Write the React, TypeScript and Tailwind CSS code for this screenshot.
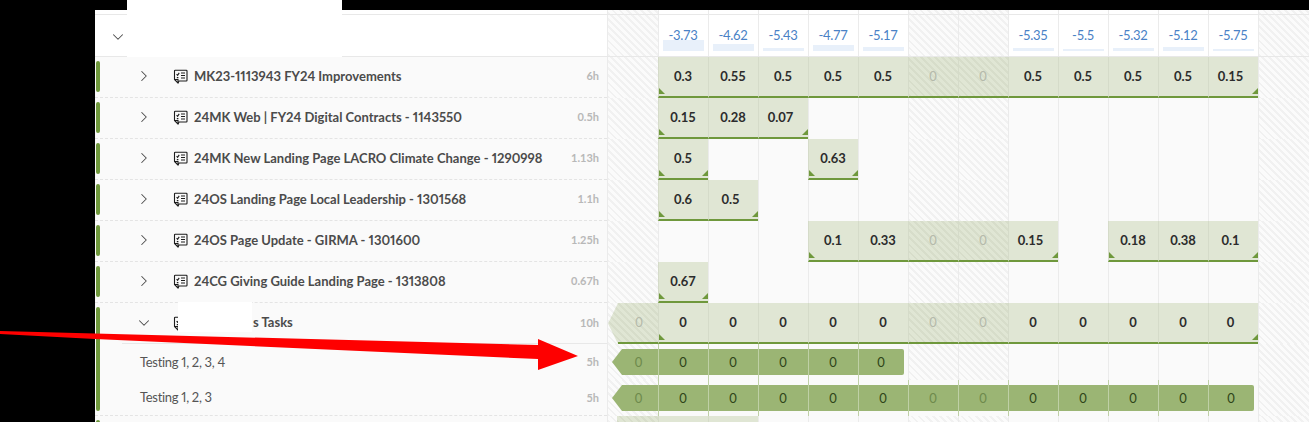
import { ChevronDown, ChevronRight } from 'lucide-react'

type Value = string | null

const HATCH = 'bg-[repeating-linear-gradient(45deg,#f1f1f1_0px,#f1f1f1_2px,#fbfbfb_2px,#fbfbfb_5px)]'
const HATCH_GREEN = 'bg-[repeating-linear-gradient(45deg,#d7ddca_0px,#d7ddca_2px,#e0e6d4_2px,#e0e6d4_5px)]'

const estimates: { label: string; bar: number }[] = [
  { label: '-3.73', bar: 11 },
  { label: '-4.62', bar: 7 },
  { label: '-5.43', bar: 3 },
  { label: '-4.77', bar: 6 },
  { label: '-5.17', bar: 4 },
  { label: '', bar: 0 },
  { label: '', bar: 0 },
  { label: '-5.35', bar: 3 },
  { label: '-5.5', bar: 2 },
  { label: '-5.32', bar: 3 },
  { label: '-5.12', bar: 4 },
  { label: '-5.75', bar: 2 },
]

const rows: { name: string; total: string; cells: Value[] }[] = [
  {
    name: 'MK23-1113943 FY24 Improvements',
    total: '6h',
    cells: ['0.3', '0.55', '0.5', '0.5', '0.5', '0', '0', '0.5', '0.5', '0.5', '0.5', '0.15'],
  },
  {
    name: '24MK Web | FY24 Digital Contracts - 1143550',
    total: '0.5h',
    cells: ['0.15', '0.28', '0.07', null, null, null, null, null, null, null, null, null],
  },
  {
    name: '24MK New Landing Page LACRO Climate Change - 1290998',
    total: '1.13h',
    cells: ['0.5', null, null, '0.63', null, null, null, null, null, null, null, null],
  },
  {
    name: '24OS Landing Page Local Leadership - 1301568',
    total: '1.1h',
    cells: ['0.6', '0.5', null, null, null, null, null, null, null, null, null, null],
  },
  {
    name: '24OS Page Update - GIRMA - 1301600',
    total: '1.25h',
    cells: [null, null, null, '0.1', '0.33', '0', '0', '0.15', null, '0.18', '0.38', '0.1'],
  },
  {
    name: '24CG Giving Guide Landing Page - 1313808',
    total: '0.67h',
    cells: ['0.67', null, null, null, null, null, null, null, null, null, null, null],
  },
]

const isWeekend = (i: number) => i === 5 || i === 6

function TaskIcon() {
  return (
    <svg width="15" height="15" viewBox="0 0 15 15" fill="none" stroke="#1c1c1c" strokeWidth="1.1" className="shrink-0">
      <path d="M1.5 10.5V2a.7.7 0 0 1 .7-.7h11.1a.7.7 0 0 1 .7.7v9.3a.7.7 0 0 1-.7.7H6l-1 2-3.5-3.5z" />
      <path d="M1.5 10.5H5V14" />
      <path d="M3.6 5.2l1 1.1 1.6-2.4" />
      <path d="M8 4h4M8 6.5h4M8 9h4M3.8 8.6h1.6" />
    </svg>
  )
}

function Corner({ side }: { side: 'left' | 'right' }) {
  return side === 'left' ? (
    <div className="absolute bottom-[2px] left-0 h-[6px] w-[6px] bg-[#6f983c] [clip-path:polygon(0_0,100%_100%,0_100%)]" />
  ) : (
    <div className="absolute bottom-[2px] right-0 h-[6px] w-[6px] bg-[#6f983c] [clip-path:polygon(100%_0,100%_100%,0_100%)]" />
  )
}

function SideCell() {
  return <div className={`h-full w-[51px] shrink-0 border-l border-[#ebebeb] ${HATCH}`} />
}

function BarCell({ value, index, cells }: { value: Value; index: number; cells: Value[] }) {
  const weekend = isWeekend(index)
  if (value === null) {
    return <div className={`h-full w-[50px] shrink-0 border-l border-[#ebebeb] ${weekend ? HATCH : ''}`} />
  }
  const first = index === 0 || cells[index - 1] === null
  const last = index === cells.length - 1 || cells[index + 1] === null
  return (
    <div
      className={`relative flex h-full w-[50px] shrink-0 items-center justify-center border-b-2 border-l border-b-[#6f983c] border-l-[#d5dbc9] text-[13px] ${
        weekend ? `${HATCH_GREEN} font-normal text-[#b4b9aa]` : 'bg-[#e0e6d4] font-bold text-[#2c2c2c]'
      } ${last && !first ? 'pr-[6px]' : 'pr-[1px]'}`}
    >
      {value}
      {first && <Corner side="left" />}
      {last && <Corner side="right" />}
    </div>
  )
}

function TaskRow({ name, total, cells }: { name: string; total: string; cells: Value[] }) {
  return (
    <div className="flex h-[41px] bg-[#fafafa]">
      <div className="relative flex w-[512px] shrink-0 items-center border-b border-dashed border-[#e4e4e4] pb-[1px] pr-2">
        <div className="absolute left-[1px] top-[4px] bottom-[5px] w-[4px] rounded-[2px] bg-[#6f983c]" />
        <ChevronRight size={18} strokeWidth={1.4} className="-mt-[1px] ml-[40px] text-[#4b4b4b]" />
        <div className="ml-[20px] flex items-center gap-[6px]">
          <TaskIcon />
          <span className="text-[13px] font-bold text-[#4b4b4b] proportional-nums">{name}</span>
        </div>
        <span className="ml-auto text-[11px] font-bold text-[#b8b8b8]">{total}</span>
      </div>
      <SideCell />
      {cells.map((value, i) => (
        <BarCell key={i} value={value} index={i} cells={cells} />
      ))}
      <SideCell />
    </div>
  )
}

function GroupRow() {
  return (
    <div className="flex h-[41px] bg-[#fafafa]">
      <div className="relative flex w-[512px] shrink-0 items-center pb-[1px] pr-2">
        <div className="absolute left-[1px] top-[4px] bottom-0 w-[4px] rounded-t-[2px] bg-[#6f983c]" />
        <div className="absolute bottom-0 left-[27px] right-0 h-px bg-[#e8e8e8]" />
        <ChevronDown size={18} strokeWidth={1.4} className="-mt-[1px] ml-[40px] text-[#4b4b4b]" />
        <div className="ml-[20px] flex items-center gap-[6px]">
          <TaskIcon />
          <span className="pl-[59px] text-[13px] font-bold text-[#4b4b4b]">s Tasks</span>
        </div>
        <span className="ml-auto text-[11px] font-bold text-[#b8b8b8]">10h</span>
      </div>
      <div className={`relative h-full w-[51px] shrink-0 border-l border-[#ebebeb] ${HATCH}`}>
        <div className={`flex h-full items-center justify-center pb-[1px] pl-[12px] text-[13px] text-[#b4b9aa] [clip-path:polygon(0_50%,10px_0,100%_0,100%_100%,10px_100%)] ${HATCH_GREEN}`}>
          0
        </div>
        <div className="absolute bottom-0 left-[10px] right-0 h-[2px] bg-[#6f983c]" />
      </div>
      {Array.from({ length: 12 }, (_, i) => (
        <BarCell key={i} value="0" index={i} cells={Array(12).fill('0')} />
      ))}
      <SideCell />
    </div>
  )
}

function SubRow({ name, count, dashed }: { name: string; count: number; dashed?: boolean }) {
  return (
    <div className="flex h-[36px] bg-[#fafafa]">
      <div className={`relative flex w-[512px] shrink-0 items-center pr-2 pt-[1px] ${dashed ? 'border-b border-dashed border-[#e4e4e4]' : ''}`}>
        <div className={`absolute left-[1px] top-0 w-[4px] bg-[#6f983c] ${dashed ? 'bottom-[4px] rounded-b-[2px]' : 'bottom-0'}`} />
        <span className="ml-[45px] text-[13px] tracking-[-0.3px] text-[#555] proportional-nums">{name}</span>
        <span className="ml-auto text-[11px] font-bold text-[#b8b8b8]">5h</span>
      </div>
      <div className={`h-full w-[51px] shrink-0 border-l border-[#ebebeb] py-[5px] ${HATCH}`}>
        <div className="ml-[4px] flex h-[26px] items-center justify-center bg-[#9bb574] pl-[7px] pt-[1px] text-[13px] text-[#6e8a4c] [clip-path:polygon(0_50%,10px_0,100%_0,100%_100%,10px_100%)]">
          0
        </div>
      </div>
      {Array.from({ length: 12 }, (_, i) => {
        const on = i < count
        const last = i === count - 1
        return (
          <div key={i} className={`h-full w-[50px] shrink-0 border-l py-[5px] ${on ? 'border-[#bfd0a6]' : 'border-[#ebebeb]'} ${isWeekend(i) && !on ? HATCH : ''}`}>
            {on && (
              <div
                className={`flex h-[26px] items-center justify-center bg-[#9bb574] pr-[1px] pt-[1px] text-[13px] ${isWeekend(i) ? 'text-[#6e8a4c]' : 'text-[#2e4418]'} ${
                  last ? 'mr-[4px] rounded-r-[2px]' : ''
                }`}
              >
                0
              </div>
            )}
          </div>
        )
      })}
      <SideCell />
    </div>
  )
}

export default function App() {
  return (
    <div className="relative h-[422px] w-[1309px] overflow-hidden bg-black pl-[95px] pt-[10px] font-['Lato','Noto_Sans',sans-serif]">
      {/* sliver of the row above */}
      <div className="flex h-[4px] bg-white">
        <div className="w-[512px] shrink-0" />
        <SideCell />
        {estimates.map((_, i) => (
          <div key={i} className={`h-full w-[50px] shrink-0 border-l border-[#ebebeb] ${isWeekend(i) ? HATCH : ''}`} />
        ))}
        <SideCell />
      </div>

      {/* week totals */}
      <div className="flex h-[43px] border-y border-[#e8e8e8] bg-white">
        <div className="flex w-[512px] shrink-0 items-center pt-[2px]">
          <ChevronDown size={18} strokeWidth={1.4} className="ml-[14px] text-[#4b4b4b]" />
        </div>
        <SideCell />
        {estimates.map((e, i) => (
          <div
            key={i}
            className={`relative flex h-full w-[50px] shrink-0 items-center justify-center border-l border-[#ebebeb] pr-[1px] pt-[1px] ${isWeekend(i) ? HATCH : ''}`}
          >
            {e.bar > 0 && <div className="absolute bottom-[5px] left-[4px] right-[4px] bg-[#e8f0fa]" style={{ height: e.bar }} />}
            <span className="relative text-[13px] tracking-[-0.3px] text-[#4a82c6]">{e.label}</span>
          </div>
        ))}
        <SideCell />
      </div>

      {rows.map((row) => (
        <TaskRow key={row.name} {...row} />
      ))}
      <GroupRow />
      <SubRow name="Testing 1, 2, 3, 4" count={5} />
      <SubRow name="Testing 1, 2, 3" count={12} dashed />

      {/* start of the next row */}
      <div className="flex h-[6px] bg-[#fafafa]">
        <div className="relative w-[512px] shrink-0">
          <div className="absolute left-[1px] top-[4px] bottom-0 w-[4px] rounded-t-[2px] bg-[#6f983c]" />
        </div>
        <div className={`h-full w-[51px] shrink-0 border-l border-[#ebebeb] pl-[9px] ${HATCH}`}>
          <div className={`h-full ${HATCH_GREEN}`} />
        </div>
        {estimates.map((_, i) => (
          <div key={i} className={`h-full w-[50px] shrink-0 border-l ${i < 2 ? 'border-[#d5dbc9] bg-[#e0e6d4]' : 'border-[#ebebeb]'} ${isWeekend(i) ? HATCH : ''}`} />
        ))}
        <SideCell />
      </div>

      {/* redaction patches and the annotation arrow on top of the screenshot */}
      <div className="absolute left-[127px] top-0 h-[57px] w-[215px] bg-white" />
      <div className="absolute left-[178px] top-[302px] h-[30px] w-[74px] bg-white" />
      <svg className="absolute inset-0" width="1309" height="422" viewBox="0 0 1309 422">
        <polygon points="0,331 538,345 538,339 578,356 538,370 538,359 95,339 0,334" fill="#fe0000" />
      </svg>
    </div>
  )
}
